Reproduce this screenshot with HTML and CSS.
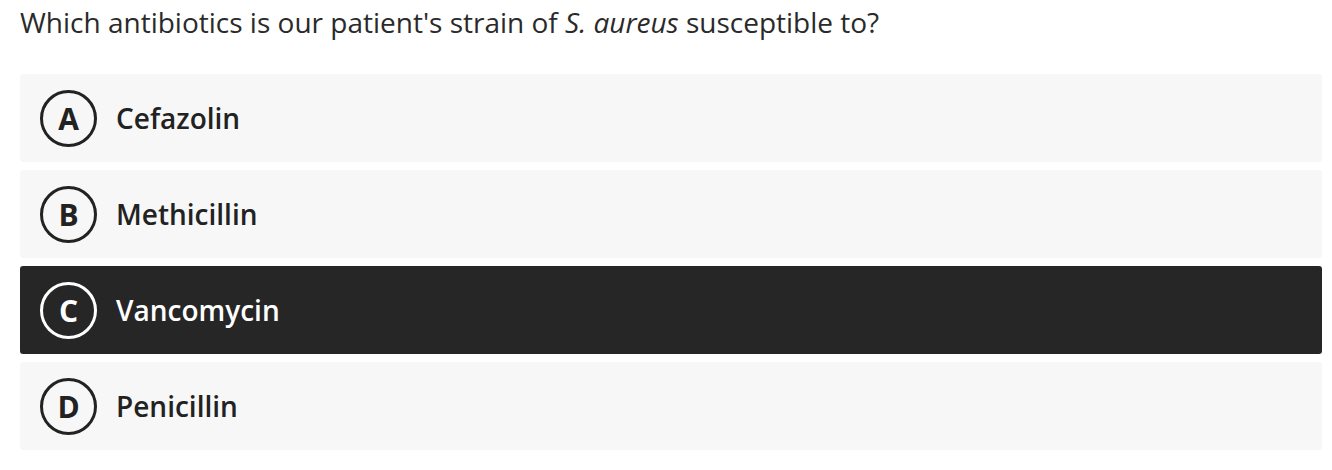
FILE: index.html
```html
<!DOCTYPE html>
<html>
<head>
<meta charset="utf-8">
<link rel="stylesheet" href="styles.css">
</head>
<body>
<div class="quiz">
  <p class="question">Which antibiotics is our patient's strain of <em>S. aureus</em> susceptible to?</p>
  <ul class="options">
    <li class="option"><span class="letter">A</span><span class="label">Cefazolin</span></li>
    <li class="option"><span class="letter">B</span><span class="label">Methicillin</span></li>
    <li class="option selected"><span class="letter">C</span><span class="label">Vancomycin</span></li>
    <li class="option"><span class="letter">D</span><span class="label">Penicillin</span></li>
  </ul>
</div>
</body>
</html>
```
FILE: styles.css
```css
* { box-sizing: border-box; }
html, body { margin: 0; padding: 0; background: #ffffff; }
body { font-family: "Open Sans", "Liberation Sans", sans-serif; color: #222222; }
.quiz { padding: 3px 10px 0 20px; }
.question {
  margin: 0 0 33px 0;
  font-size: 28px;
  line-height: 38px;
  font-weight: 400;
  color: #2a2a2a;
}
.question em { font-style: italic; }
.options { list-style: none; margin: 0; padding: 0; display: flex; flex-direction: column; gap: 8px; }
.option {
  height: 88px;
  background: #f7f7f7;
  border-radius: 3px;
  display: flex;
  align-items: center;
  padding-left: 20px;
  gap: 19px;
}
.letter {
  width: 57px;
  height: 57px;
  border: 3px solid #222222;
  border-radius: 50%;
  display: flex;
  align-items: center;
  justify-content: center;
  font-size: 30px;
  font-weight: 700;
  color: #222222;
}
.label { font-size: 28px; font-weight: 600; color: #222222; }
.option.selected { background: #262626; }
.option.selected .letter { border-color: #ffffff; color: #ffffff; }
.option.selected .label { color: #ffffff; }
```
